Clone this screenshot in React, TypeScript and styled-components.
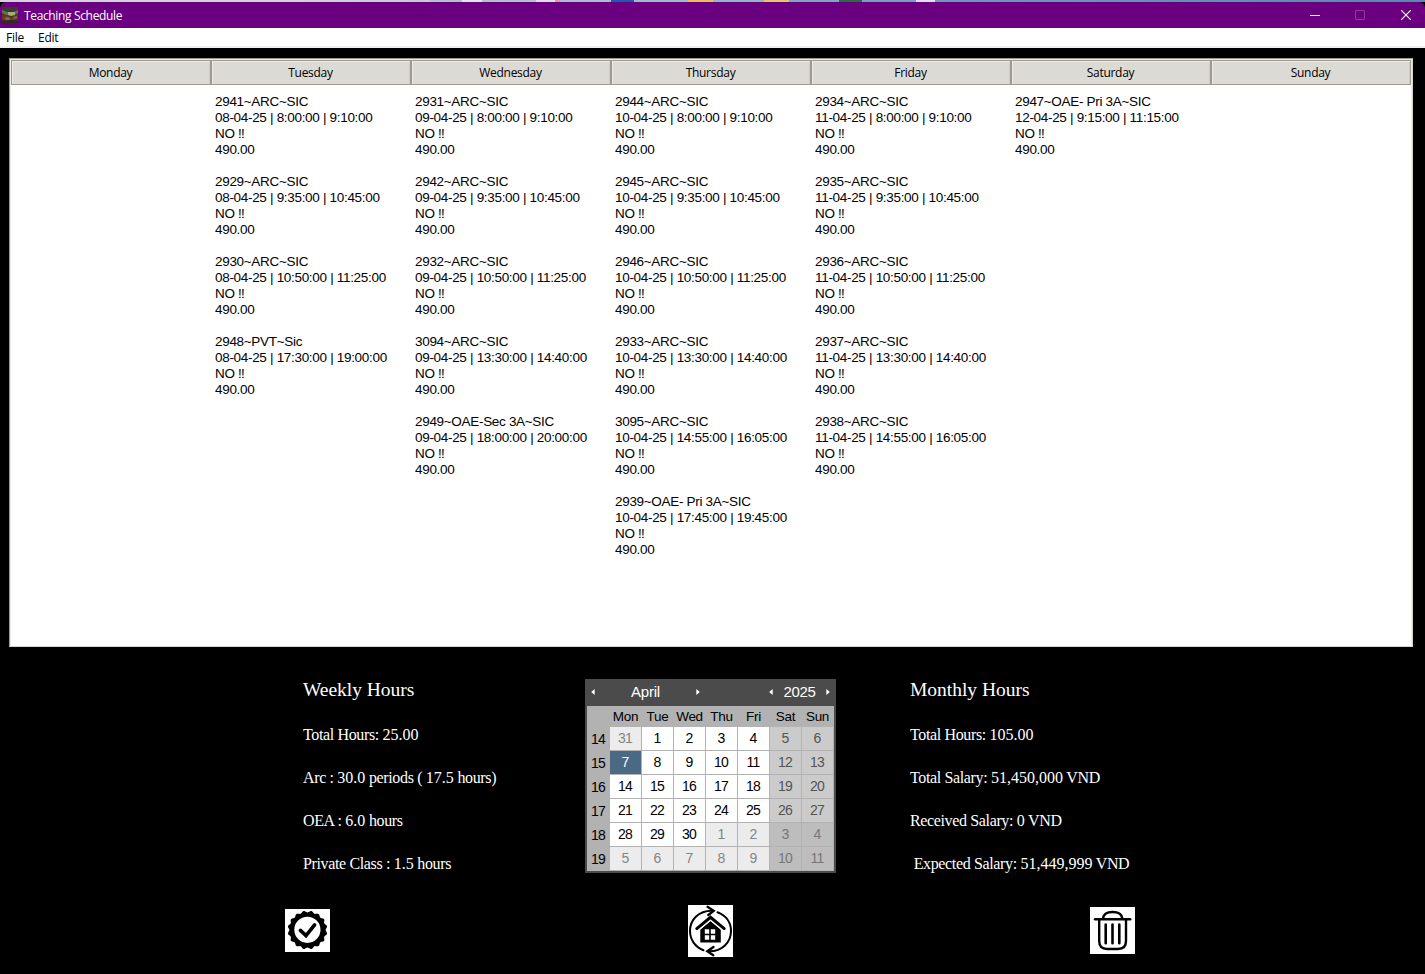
import React from 'react';
import styled, { createGlobalStyle } from 'styled-components';

const Global = createGlobalStyle`
  * { box-sizing: border-box; }
  body { margin: 0; background: #000; overflow: hidden; }
`;

const Window = styled.div`
  width: 1425px;
  height: 974px;
  background: #000;
  display: flex;
  flex-direction: column;
  font-family: 'Open Sans', 'Noto Sans', sans-serif;
  font-size: 12px;
`;

const Desktop = styled.div`
  height: 2px;
  flex: none;
  background: linear-gradient(90deg, #d2d3d8 0 300px, #c4ccd2 430px, transparent 430px),
    linear-gradient(90deg, #b0c4cd 462px, #e4e8ea 462px 482px, #b0c4cd 482px 536px, #dce2e6 536px 555px,
      #dc9aa4 555px 560px, #a9c0cc 560px 611px, #1f5aae 611px 634px, #9fbccb 634px 688px,
      #e5c257 688px 713px, #95b5c7 713px 764px, #e5c66a 764px 789px, #7fa6c2 789px 839px,
      #2c6b48 839px 862px, #76a1bf 862px 916px, #dde4ea 916px 935px, #6d9aba 935px, #5a87b0);
`;

const TitleBar = styled.header`
  height: 26px;
  flex: none;
  display: flex;
  align-items: center;
  padding-left: 2px;
  background: #6a0080;
  color: #fff;
  border-radius: 6px 6px 0 0;
`;

const Title = styled.span`
  margin-left: 6px;
  padding-top: 2px;
  flex: 1;
  line-height: 24px;
  letter-spacing: -0.35px;
`;

const WindowButtons = styled.div`
  display: flex;
  gap: 35px;
  padding-right: 15px;

  svg:last-child {
    margin: 0 -1px 0 1px;
  }
`;

const MenuBar = styled.nav`
  height: 20px;
  flex: none;
  display: flex;
  gap: 14px;
  padding-left: 6px;
  background: #fff;
  border-bottom: 2px solid #f0f0f0;
  line-height: 20px;
  color: #000;
`;

const MenuItem = styled.span`
  letter-spacing: -0.25px;
`;

const Schedule = styled.main`
  margin: 10px 12px 0 9px;
  height: 589px;
  flex: none;
  background: #fff;
  border: 1px solid #9e9a91;
  border-right-color: #d8d5cd;
  border-bottom-color: #d8d5cd;
  box-shadow: inset 1px 1px #eeebe7, inset -1px 0 #eeebe7;
  display: grid;
  grid-template-columns: repeat(7, 200px) 1fr;
  padding: 1px 0 0 1px;
`;

const Day = styled.section`
  min-width: 0;
`;

const DayHeader = styled.h2`
  margin: 0;
  width: 200px;
  height: 25px;
  padding-right: 1px;
  border: 1px solid #9e9a91;
  box-shadow: inset 1px 1px #eeebe7, inset -1px 0 #cfcdc8;
  background: #dcdad5;
  text-align: center;
  font: 12px/23px 'Open Sans', sans-serif;
  letter-spacing: -0.28px;
  color: #000;
`;

const Entries = styled.div`
  padding: 9px 0 0 4px;
  display: flex;
  flex-direction: column;
  gap: 16px;
  font: 13.5px/16px 'Liberation Sans', Arial, sans-serif;
  letter-spacing: -0.31px;
  color: #000;
  white-space: nowrap;
`;

const Entry = styled.div`
  display: flex;
  flex-direction: column;
`;

const Exclaim = styled.span`
  letter-spacing: -0.8px;
`;

const Summary = styled.div`
  height: 226px;
  flex: none;
  display: grid;
  grid-template-columns: 282px 325px 1fr;
  padding: 32px 0 0 303px;
`;

const Stats = styled.section`
  font: 16px/43px 'Liberation Serif', 'Times New Roman', serif;
  color: #fff;
  white-space: pre;
  letter-spacing: -0.36px;
`;

const StatsTitle = styled.h3`
  margin: 0 0 12px;
  font-size: 19.5px;
  font-weight: 400;
  line-height: 22px;
  letter-spacing: -0.02px;
`;

const Stat = styled.div`
  height: 43px;
`;

const Figure = styled.span`
  letter-spacing: 0;
`;

const Calendar = styled.section`
  width: 251px;
  height: 194px;
  background: #b2b2b2;
  border: 2px solid #4b4b4b;
  border-top: 0;
  font: 14px/23px 'Liberation Sans', Arial, sans-serif;
`;

const CalendarBar = styled.div`
  height: 27px;
  margin: 0 -2px;
  padding: 0 6px 2px 6px;
  display: flex;
  align-items: center;
  background: #4b4b4b;
  color: #fff;
  font-size: 15px;
`;

const Month = styled.span`
  width: 101px;
  text-align: center;
  line-height: 25px;
  letter-spacing: -0.2px;
`;

const Year = styled.span`
  width: 53px;
  text-align: center;
  line-height: 25px;
  letter-spacing: -0.3px;
`;

const Spacer = styled.span`
  flex: 1;
`;

const WeekRow = styled.div`
  display: grid;
  grid-template-columns: 22px repeat(7, 31px);
  column-gap: 1px;
  height: 24px;
  text-align: center;
`;

const WeekdayRow = styled(WeekRow)`
  height: 21px;
  line-height: 21px;
  font-size: 13.5px;
  letter-spacing: -0.3px;
`;

const WeekNumber = styled.span`
  line-height: 24px;
  letter-spacing: -0.7px;
`;

type Kind = 'work' | 'weekend' | 'otherWork' | 'otherWeekend' | 'selected';
const cellColors: Record<Kind, [string, string]> = {
  work: ['#fff', '#000'],
  weekend: ['#cbcbcb', '#555'],
  otherWork: ['#ececec', '#858585'],
  otherWeekend: ['#bdbdbd', '#777'],
  selected: ['#4a6984', '#fff'],
};

const DateCell = styled.span<{ $kind: Kind }>`
  height: 23px;
  padding-right: 1px;
  background: ${(p) => cellColors[p.$kind][0]};
  color: ${(p) => cellColors[p.$kind][1]};
  letter-spacing: -0.7px;
`;

const Actions = styled.footer`
  display: flex;
  align-items: flex-start;
  height: 52px;
  margin-top: 32px;
  padding-left: 285px;
`;

const Action = styled.button<{ $h: number; $top: number; $gap?: number }>`
  width: 45px;
  height: ${(p) => p.$h}px;
  margin: ${(p) => p.$top}px ${(p) => p.$gap ?? 0}px 0 0;
  padding: 0;
  border: 0;
  background: #fff;
  display: block;
  flex: none;

  svg {
    display: block;
  }
`;

const schedule: { day: string; items: [string, string][] }[] = [
  { day: 'Monday', items: [] },
  {
    day: 'Tuesday',
    items: [
      ['2941~ARC~SIC', '08-04-25 | 8:00:00 | 9:10:00'],
      ['2929~ARC~SIC', '08-04-25 | 9:35:00 | 10:45:00'],
      ['2930~ARC~SIC', '08-04-25 | 10:50:00 | 11:25:00'],
      ['2948~PVT~Sic', '08-04-25 | 17:30:00 | 19:00:00'],
    ],
  },
  {
    day: 'Wednesday',
    items: [
      ['2931~ARC~SIC', '09-04-25 | 8:00:00 | 9:10:00'],
      ['2942~ARC~SIC', '09-04-25 | 9:35:00 | 10:45:00'],
      ['2932~ARC~SIC', '09-04-25 | 10:50:00 | 11:25:00'],
      ['3094~ARC~SIC', '09-04-25 | 13:30:00 | 14:40:00'],
      ['2949~OAE-Sec 3A~SIC', '09-04-25 | 18:00:00 | 20:00:00'],
    ],
  },
  {
    day: 'Thursday',
    items: [
      ['2944~ARC~SIC', '10-04-25 | 8:00:00 | 9:10:00'],
      ['2945~ARC~SIC', '10-04-25 | 9:35:00 | 10:45:00'],
      ['2946~ARC~SIC', '10-04-25 | 10:50:00 | 11:25:00'],
      ['2933~ARC~SIC', '10-04-25 | 13:30:00 | 14:40:00'],
      ['3095~ARC~SIC', '10-04-25 | 14:55:00 | 16:05:00'],
      ['2939~OAE- Pri 3A~SIC', '10-04-25 | 17:45:00 | 19:45:00'],
    ],
  },
  {
    day: 'Friday',
    items: [
      ['2934~ARC~SIC', '11-04-25 | 8:00:00 | 9:10:00'],
      ['2935~ARC~SIC', '11-04-25 | 9:35:00 | 10:45:00'],
      ['2936~ARC~SIC', '11-04-25 | 10:50:00 | 11:25:00'],
      ['2937~ARC~SIC', '11-04-25 | 13:30:00 | 14:40:00'],
      ['2938~ARC~SIC', '11-04-25 | 14:55:00 | 16:05:00'],
    ],
  },
  { day: 'Saturday', items: [['2947~OAE- Pri 3A~SIC', '12-04-25 | 9:15:00 | 11:15:00']] },
  { day: 'Sunday', items: [] },
];

const weekly = ['Total Hours: 25.00', 'Arc : 30.0 periods ( 17.5 hours)', 'OEA : 6.0 hours', 'Private Class : 1.5 hours'];
const monthly = [
  'Total Hours: 105.00',
  'Total Salary: 51,450,000 VND',
  'Received Salary: 0 VND',
  ' Expected Salary: 51,449,999 VND',
];

const weeks = [
  [31, 1, 2, 3, 4, 5, 6],
  [7, 8, 9, 10, 11, 12, 13],
  [14, 15, 16, 17, 18, 19, 20],
  [21, 22, 23, 24, 25, 26, 27],
  [28, 29, 30, 1, 2, 3, 4],
  [5, 6, 7, 8, 9, 10, 11],
];

function kindOf(week: number, col: number, date: number): Kind {
  if (week === 1 && col === 0) return 'selected';
  const other = (week === 0 && date > 20) || (week > 3 && date < 20);
  if (col > 4) return other ? 'otherWeekend' : 'weekend';
  return other ? 'otherWork' : 'work';
}

function StatLine({ text }: { text: string }) {
  return (
    <Stat>
      {text.split(/([\d.,]+)/).map((part, i) => (i % 2 ? <Figure key={i}>{part}</Figure> : part))}
    </Stat>
  );
}

function Arrow({ right = false }: { right?: boolean }) {
  return (
    <svg width="4" height="6" viewBox="0 0 4 6">
      <path d={right ? 'M0.3 0L3.8 3L0.3 6Z' : 'M3.7 0L0.2 3L3.7 6Z'} fill="#fff" />
    </svg>
  );
}

function AppIcon() {
  return (
    <svg width="16" height="16" viewBox="0 0 16 16">
      <rect width="16" height="16" fill="#49372b" />
      <path d="M0 0H16V5L11 4L5 5L0 4Z" fill="#3c3b35" />
      <path d="M0 3L5 5H12L16 3V6L12 8H4L0 6Z" fill="#6e6a55" />
      <path d="M6 5H13V8L9 9L6 8Z" fill="#a5ad74" />
      <path d="M0 8L5 9L9 11L16 8V12L8 14L0 12Z" fill="#633c28" />
      <path d="M2 11L6 10L9 12L5 14ZM11 10L15 9V11L12 12Z" fill="#91624a" />
      <path d="M0 14L8 13L16 14V16H0Z" fill="#292b25" />
    </svg>
  );
}

function scallopPath() {
  const points: string[] = [];
  for (let i = 0; i < 192; i++) {
    const a = (i / 192) * Math.PI * 2;
    const r = 19 + 0.9 * Math.cos(a * 16 + Math.PI);
    points.push(`${(22.5 + r * Math.sin(a)).toFixed(2)} ${(21 - r * 0.97 * Math.cos(a)).toFixed(2)}`);
  }
  return `M${points.join('L')}Z`;
}

function BadgeIcon() {
  return (
    <svg width="45" height="43" viewBox="0 0 45 43">
      <path d={scallopPath()} fill="#000" />
      <circle cx="22.4" cy="20.8" r="13.1" fill="#fff" />
      <path d="M15.4 21.4L21 26.6L29.6 15.8" fill="none" stroke="#000" strokeWidth="3.6" strokeLinecap="round" />
    </svg>
  );
}

function HomeIcon() {
  return (
    <svg width="45" height="52" viewBox="0 0 45 52">
      <g fill="none" stroke="#000" strokeWidth="2" strokeLinecap="round">
        <path d="M15.5 45.2C7 42 2 34.5 2 26C2 14.5 11 5.8 23.5 5.8" />
        <path d="M29.5 7.3C38 10.5 43 17.5 43 26C43 37.5 34 46.2 21.5 46.2" />
        <path d="M19.5 1.8L25.7 5.8L20.3 10" strokeWidth="2.3" />
        <path d="M25.5 42L19.3 46.2L25.3 50.2" strokeWidth="2.3" />
      </g>
      <path d="M12.3 24.5L22.5 16L32.8 24.5V37.6H12.3Z" fill="#000" />
      <path d="M9 24.8L22.5 13.300L36 24.800" fill="none" stroke="#fff" strokeWidth="4" />
      <path d="M8.8 23.6L22.5 12.3L36.2 23.6" fill="none" stroke="#000" strokeWidth="3" strokeLinecap="round" />
      <path
        d="M16.8 24.3H21.2V28.7H16.8ZM22.8 24.3H27.2V28.7H22.8ZM16.8 30.3H21.2V34.7H16.8ZM22.8 30.3H27.2V34.7H22.8Z"
        fill="#fff"
      />
    </svg>
  );
}

function TrashIcon() {
  return (
    <svg width="45" height="47" viewBox="0 0 45 47">
      <g fill="none" stroke="#000" strokeWidth="2.4" strokeLinecap="round">
        <path d="M5 12.3H40.2" />
        <path d="M13 11.5C13.5 7 17 5 22.6 5C28.2 5 31.8 7 32.3 11.5" />
        <path d="M9.2 12.5V34Q9.2 42 17 42H28Q36 42 36 34V12.5" />
        <path d="M15.7 17.5V36.3M22.5 17.5V36.3M29.3 17.5V36.3" strokeWidth="2.6" />
      </g>
    </svg>
  );
}

export default function App() {
  return (
    <Window>
      <Global />
      <Desktop />
      <TitleBar>
        <AppIcon />
        <Title>Teaching Schedule</Title>
        <WindowButtons>
          <svg width="10" height="10" viewBox="0 0 10 10">
            <path d="M0 5.5H10" stroke="#fff" />
          </svg>
          <svg width="10" height="10" viewBox="0 0 10 10">
            <rect x="0.5" y="0.5" width="9" height="9" rx="0.5" fill="none" stroke="#8d3b9c" />
          </svg>
          <svg width="10" height="10" viewBox="0 0 10 10">
            <path d="M0 0L10 10M10 0L0 10" stroke="#fff" strokeWidth="1.1" />
          </svg>
        </WindowButtons>
      </TitleBar>
      <MenuBar>
        <MenuItem>File</MenuItem>
        <MenuItem>Edit</MenuItem>
      </MenuBar>
      <Schedule>
        {schedule.map(({ day, items }) => (
          <Day key={day}>
            <DayHeader>{day}</DayHeader>
            <Entries>
              {items.map(([name, time]) => (
                <Entry key={name}>
                  <span>{name}</span>
                  <span>{time}</span>
                  <span>
                    NO <Exclaim>!!</Exclaim>
                  </span>
                  <span>490.00</span>
                </Entry>
              ))}
            </Entries>
          </Day>
        ))}
      </Schedule>
      <Summary>
        <Stats>
          <StatsTitle>Weekly Hours</StatsTitle>
          {weekly.map((t) => (
            <StatLine key={t} text={t} />
          ))}
        </Stats>
        <Calendar>
          <CalendarBar>
            <Arrow />
            <Month>April</Month>
            <Arrow right />
            <Spacer />
            <Arrow />
            <Year>2025</Year>
            <Arrow right />
          </CalendarBar>
          <WeekdayRow>
            <span />
            {['Mon', 'Tue', 'Wed', 'Thu', 'Fri', 'Sat', 'Sun'].map((d) => (
              <span key={d}>{d}</span>
            ))}
          </WeekdayRow>
          {weeks.map((dates, w) => (
            <WeekRow key={w}>
              <WeekNumber>{14 + w}</WeekNumber>
              {dates.map((date, col) => (
                <DateCell key={col} $kind={kindOf(w, col, date)}>
                  {date}
                </DateCell>
              ))}
            </WeekRow>
          ))}
        </Calendar>
        <Stats>
          <StatsTitle>Monthly Hours</StatsTitle>
          {monthly.map((t) => (
            <StatLine key={t} text={t} />
          ))}
        </Stats>
      </Summary>
      <Actions>
        <Action $h={43} $top={4} $gap={358} aria-label="Confirm">
          <BadgeIcon />
        </Action>
        <Action $h={52} $top={0} $gap={357} aria-label="Home">
          <HomeIcon />
        </Action>
        <Action $h={47} $top={2} aria-label="Delete">
          <TrashIcon />
        </Action>
      </Actions>
    </Window>
  );
}
